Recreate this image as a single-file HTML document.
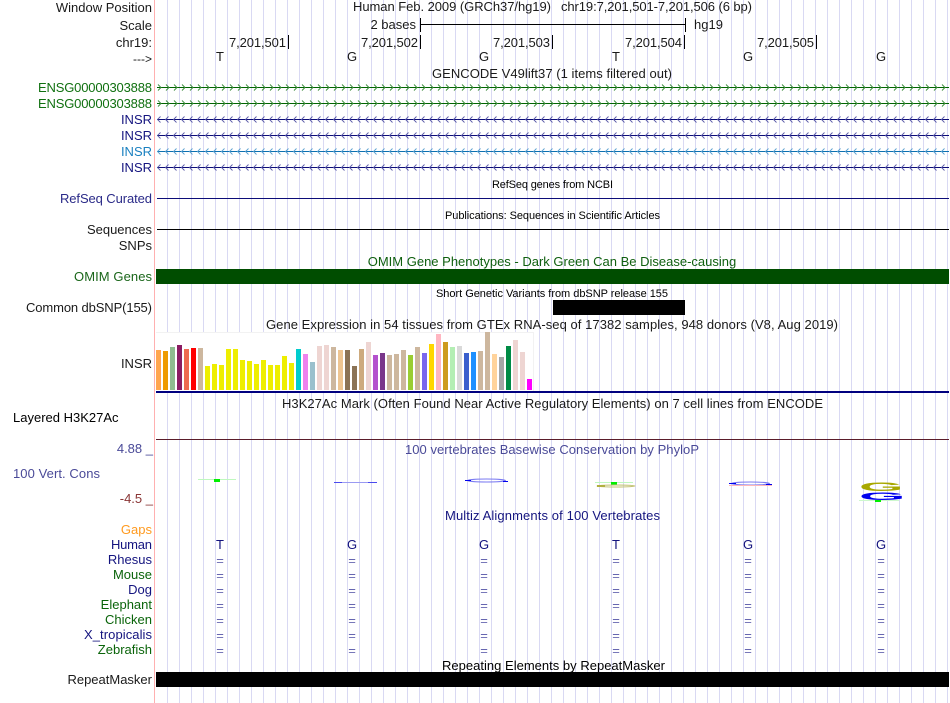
<!DOCTYPE html>
<html><head><meta charset="utf-8"><style>
html,body{margin:0;padding:0;background:#fff;width:950px;height:703px;overflow:hidden}
svg{display:block}
text{font-family:"Liberation Sans",sans-serif;font-size:13px;fill:#1a1a1a}
.l{text-anchor:end}
.c{text-anchor:middle}
.s{font-size:11px;fill:#000}
.n{fill:#14147f}.g{fill:#0a640a}
.eq{fill:#6666b0;text-anchor:middle}
</style></head><body>
<svg width="950" height="703" viewBox="0 0 950 703" xmlns="http://www.w3.org/2000/svg">
<defs>
<pattern id="grid" x="167" y="0" width="12" height="703" patternUnits="userSpaceOnUse"><rect width="1" height="703" fill="#d9d9f3"/></pattern>
<pattern id="pg" x="157" y="-4" width="8" height="9" patternUnits="userSpaceOnUse"><path d="M1 1.500 L4 4.500 L1 7.500" fill="none" stroke="#3a8a3a" stroke-width="0.900"/></pattern>
<pattern id="pn" x="157" y="-4" width="8" height="9" patternUnits="userSpaceOnUse"><path d="M3.500 1.500 L0.500 4.500 L3.500 7.500" fill="none" stroke="#5a5aa8" stroke-width="0.900"/></pattern>
<pattern id="pb" x="157" y="-4" width="8" height="9" patternUnits="userSpaceOnUse"><path d="M3.500 1.500 L0.500 4.500 L3.500 7.500" fill="none" stroke="#5aa0d0" stroke-width="0.900"/></pattern>
</defs>
<rect x="156" y="0" width="794" height="703" fill="url(#grid)"/>
<rect x="154" y="0" width="1" height="703" fill="#ffb0b0"/>

<!-- header -->
<text class="l" x="152" y="12">Window Position</text>
<text class="l" x="152" y="30">Scale</text>
<text class="l" x="152" y="47">chr19:</text>
<text class="l" x="152" y="63" style="font-size:12px">---&gt;</text>
<text x="353" y="11" textLength="198">Human Feb. 2009 (GRCh37/hg19)</text>
<text x="561" y="11" textLength="191">chr19:7,201,501-7,201,506 (6 bp)</text>
<text class="l" x="416" y="29">2 bases</text>
<rect x="420" y="24" width="265" height="1" fill="#000"/>
<rect x="420" y="18" width="1" height="14" fill="#000"/>
<rect x="685" y="18" width="1" height="14" fill="#000"/>
<text x="694" y="29">hg19</text>
<text x="229" y="47" textLength="57">7,201,501</text><rect x="288" y="35" width="1" height="14" fill="#000"/>
<text x="361" y="47" textLength="57">7,201,502</text><rect x="420" y="35" width="1" height="14" fill="#000"/>
<text x="493" y="47" textLength="57">7,201,503</text><rect x="552" y="35" width="1" height="14" fill="#000"/>
<text x="625" y="47" textLength="57">7,201,504</text><rect x="684" y="35" width="1" height="14" fill="#000"/>
<text x="757" y="47" textLength="57">7,201,505</text><rect x="816" y="35" width="1" height="14" fill="#000"/>
<text class="c" x="220" y="61">T</text><text class="c" x="352" y="61">G</text><text class="c" x="484" y="61">G</text><text class="c" x="616" y="61">T</text><text class="c" x="748" y="61">G</text><text class="c" x="881" y="61">G</text>

<!-- gencode -->
<text x="432" y="78" textLength="240">GENCODE V49lift37 (1 items filtered out)</text>
<text x="38" y="92" textLength="114" style="fill:#107010">ENSG00000303888</text>
<text x="38" y="108" textLength="114" style="fill:#107010">ENSG00000303888</text>
<text class="l n" x="152" y="124">INSR</text>
<text class="l n" x="152" y="140">INSR</text>
<text class="l" x="152" y="156" style="fill:#1a80c0">INSR</text>
<text class="l n" x="152" y="172">INSR</text>
<g transform="translate(0,87)"><rect x="157" y="0" width="792" height="1" fill="#006400"/><rect x="157" y="-4" width="792" height="9" fill="url(#pg)"/></g>
<g transform="translate(0,103)"><rect x="157" y="0" width="792" height="1" fill="#006400"/><rect x="157" y="-4" width="792" height="9" fill="url(#pg)"/></g>
<g transform="translate(0,119)"><rect x="157" y="0" width="792" height="1" fill="#0c0c78"/><rect x="157" y="-4" width="792" height="9" fill="url(#pn)"/></g>
<g transform="translate(0,135)"><rect x="157" y="0" width="792" height="1" fill="#0c0c78"/><rect x="157" y="-4" width="792" height="9" fill="url(#pn)"/></g>
<g transform="translate(0,151)"><rect x="157" y="0" width="792" height="1" fill="#0c70b0"/><rect x="157" y="-4" width="792" height="9" fill="url(#pb)"/></g>
<g transform="translate(0,167)"><rect x="157" y="0" width="792" height="1" fill="#0c0c78"/><rect x="157" y="-4" width="792" height="9" fill="url(#pn)"/></g>

<!-- refseq etc -->
<text class="s" x="492" y="188" textLength="121">RefSeq genes from NCBI</text>
<text x="60" y="203" textLength="92" style="fill:#2a2a88">RefSeq Curated</text>
<rect x="157" y="198" width="792" height="1" fill="#0c0c78"/>
<text class="s" x="445" y="219" textLength="215">Publications: Sequences in Scientific Articles</text>
<text class="l" x="152" y="234">Sequences</text>
<rect x="157" y="229" width="792" height="1" fill="#000"/>
<text class="l" x="152" y="250">SNPs</text>
<text class="c" x="552" y="266" style="fill:#0f5f0f">OMIM Gene Phenotypes - Dark Green Can Be Disease-causing</text>
<text x="74" y="281" textLength="78" style="fill:#1a661a">OMIM Genes</text>
<rect x="156" y="269" width="793" height="15" fill="#004d00"/>
<text class="s" x="436" y="297" textLength="232">Short Genetic Variants from dbSNP release 155</text>
<text x="26" y="312" textLength="126">Common dbSNP(155)</text>
<rect x="553" y="300" width="132" height="15" fill="#000"/>

<!-- GTEx -->
<text x="266" y="329" textLength="572">Gene Expression in 54 tissues from GTEx RNA-seq of 17382 samples, 948 donors (V8, Aug 2019)</text>
<text class="l" x="152" y="368">INSR</text>
<rect x="156" y="332" width="377" height="59" fill="#fff"/>
<path d="M156 332.500H533.500V391" fill="none" stroke="#f2f2f2"/>
<g>
<rect x="156" y="350" width="5" height="40" fill="#FFA54F"/>
<rect x="163" y="351" width="5" height="39" fill="#EE9A00"/>
<rect x="170" y="347" width="5" height="43" fill="#8FBC8F"/>
<rect x="177" y="345" width="5" height="45" fill="#8B1C62"/>
<rect x="184" y="349" width="5" height="41" fill="#EE6A50"/>
<rect x="191" y="348" width="5" height="42" fill="#FF0000"/>
<rect x="198" y="348" width="5" height="42" fill="#CDB79E"/>
<rect x="205" y="366" width="5" height="24" fill="#EEEE00"/>
<rect x="212" y="364" width="5" height="26" fill="#EEEE00"/>
<rect x="219" y="365" width="5" height="25" fill="#EEEE00"/>
<rect x="226" y="349" width="5" height="41" fill="#EEEE00"/>
<rect x="233" y="349" width="5" height="41" fill="#EEEE00"/>
<rect x="240" y="360" width="5" height="30" fill="#EEEE00"/>
<rect x="247" y="361" width="5" height="29" fill="#EEEE00"/>
<rect x="254" y="364" width="5" height="26" fill="#EEEE00"/>
<rect x="261" y="360" width="5" height="30" fill="#EEEE00"/>
<rect x="268" y="365" width="5" height="25" fill="#EEEE00"/>
<rect x="275" y="365" width="5" height="25" fill="#EEEE00"/>
<rect x="282" y="356" width="5" height="34" fill="#EEEE00"/>
<rect x="289" y="363" width="5" height="27" fill="#EEEE00"/>
<rect x="296" y="349" width="5" height="41" fill="#00CDCD"/>
<rect x="303" y="354" width="5" height="36" fill="#EE82EE"/>
<rect x="310" y="362" width="5" height="28" fill="#9AC0CD"/>
<rect x="317" y="346" width="5" height="44" fill="#EED5D2"/>
<rect x="324" y="345" width="5" height="45" fill="#EED5D2"/>
<rect x="331" y="347" width="5" height="43" fill="#CDB79E"/>
<rect x="338" y="350" width="5" height="40" fill="#EEC591"/>
<rect x="345" y="350" width="5" height="40" fill="#8B7355"/>
<rect x="352" y="366" width="5" height="24" fill="#8B7355"/>
<rect x="359" y="349" width="5" height="41" fill="#CDAA7D"/>
<rect x="366" y="342" width="5" height="48" fill="#EED5D2"/>
<rect x="373" y="355" width="5" height="35" fill="#B452CD"/>
<rect x="380" y="353" width="5" height="37" fill="#7A378B"/>
<rect x="387" y="355" width="5" height="35" fill="#CDB79E"/>
<rect x="394" y="354" width="5" height="36" fill="#CDB79E"/>
<rect x="401" y="350" width="5" height="40" fill="#CDB79E"/>
<rect x="408" y="355" width="5" height="35" fill="#9ACD32"/>
<rect x="415" y="347" width="5" height="43" fill="#CDB79E"/>
<rect x="422" y="353" width="5" height="37" fill="#7A67EE"/>
<rect x="429" y="344" width="5" height="46" fill="#FFD700"/>
<rect x="436" y="334" width="5" height="56" fill="#FFB6C1"/>
<rect x="443" y="342" width="5" height="48" fill="#CD9B1D"/>
<rect x="450" y="347" width="5" height="43" fill="#B4EEB4"/>
<rect x="457" y="346" width="5" height="44" fill="#D9D9D9"/>
<rect x="464" y="353" width="5" height="37" fill="#3A5FCD"/>
<rect x="471" y="352" width="5" height="38" fill="#1E90FF"/>
<rect x="478" y="351" width="5" height="39" fill="#CDB79E"/>
<rect x="485" y="332" width="5" height="58" fill="#CDB79E"/>
<rect x="492" y="354" width="5" height="36" fill="#FFD39B"/>
<rect x="499" y="357" width="5" height="33" fill="#A6A6A6"/>
<rect x="506" y="346" width="5" height="44" fill="#008B45"/>
<rect x="513" y="340" width="5" height="50" fill="#EED5D2"/>
<rect x="520" y="352" width="5" height="38" fill="#EED5D2"/>
<rect x="527" y="379" width="5" height="11" fill="#FF00FF"/>
</g>
<rect x="156" y="391" width="793" height="2" fill="#00007f"/>

<!-- H3K27Ac -->
<text x="282" y="408" textLength="541">H3K27Ac Mark (Often Found Near Active Regulatory Elements) on 7 cell lines from ENCODE</text>
<text x="13" y="422" style="fill:#000">Layered H3K27Ac</text>
<rect x="156" y="439" width="793" height="1" fill="#5a1c2a"/>

<!-- cons -->
<text class="l" x="153" y="453" style="fill:#4a4a98">4.88 _</text>
<text x="13" y="478" textLength="87" style="fill:#4a4a98">100 Vert. Cons</text>
<text class="l" x="153" y="503" style="fill:#8a3535">-4.5 _</text>
<text x="405" y="454" textLength="294" style="fill:#4a4a98">100 vertebrates Basewise Conservation by PhyloP</text>

<!-- logos -->
<rect x="198" y="479" width="38" height="1" fill="#bff8bf"/>
<rect x="214" y="479" width="6" height="3" fill="#00ee00"/>
<rect x="334" y="482" width="43" height="1" fill="#9a9af2"/>
<rect x="334" y="482" width="8" height="1" fill="#4a4aee"/>
<rect x="368" y="482" width="9" height="1" fill="#4a4aee"/>
<ellipse cx="486.500" cy="480.500" rx="19" ry="1.500" fill="none" stroke="#7a7af2" stroke-width="1"/>
<rect x="465" y="480" width="6" height="1" fill="#0000ee"/>
<rect x="503" y="481" width="5" height="1" fill="#0000ee"/>
<rect x="595" y="482" width="38" height="1" fill="#bff8bf"/>
<rect x="611" y="482" width="6" height="3" fill="#00ee00"/>
<ellipse cx="616" cy="486" rx="19" ry="1" fill="none" stroke="#c0c070" stroke-width="1"/>
<rect x="597" y="485" width="8" height="2" fill="#b0b040"/>
<ellipse cx="750.500" cy="483.500" rx="19" ry="1.500" fill="none" stroke="#7a7af2" stroke-width="1"/>
<rect x="729" y="483" width="7" height="1" fill="#0000ee"/>
<rect x="766" y="484" width="6" height="1" fill="#0000ee"/>
<rect x="729" y="485" width="43" height="1" fill="#ffb8b8"/>
<text transform="translate(859,491) scale(4.400,0.950)" style="fill:#a8a800;font-size:13px;font-weight:bold">G</text>
<text transform="translate(859,500) scale(4.600,0.850)" style="fill:#0000ee;font-size:13px;font-weight:bold">G</text>
<rect x="859" y="500" width="40" height="1" fill="#cdf8cd"/>
<rect x="875" y="500" width="6" height="2" fill="#00ee00"/>

<!-- multiz -->
<text class="n" x="445" y="520" textLength="215">Multiz Alignments of 100 Vertebrates</text>
<text class="l" x="152" y="534" style="fill:#ff9a1f">Gaps</text>
<text class="n" x="111" y="549" textLength="41">Human</text>
<text class="l n" x="152" y="564">Rhesus</text>
<text class="l g" x="152" y="579">Mouse</text>
<text class="l n" x="152" y="594">Dog</text>
<text class="l g" x="152" y="609">Elephant</text>
<text class="l g" x="152" y="624">Chicken</text>
<text class="n" x="84" y="639" textLength="68">X_tropicalis</text>
<text class="l g" x="152" y="654">Zebrafish</text>
<g class="n">
<text class="c n" x="220" y="549">T</text><text class="c n" x="352" y="549">G</text><text class="c n" x="484" y="549">G</text><text class="c n" x="616" y="549">T</text><text class="c n" x="748" y="549">G</text><text class="c n" x="881" y="549">G</text>
</g>
<text class="eq" x="220" y="565">=</text><text class="eq" x="352" y="565">=</text><text class="eq" x="484" y="565">=</text><text class="eq" x="616" y="565">=</text><text class="eq" x="748" y="565">=</text><text class="eq" x="881" y="565">=</text>
<text class="eq" x="220" y="580">=</text><text class="eq" x="352" y="580">=</text><text class="eq" x="484" y="580">=</text><text class="eq" x="616" y="580">=</text><text class="eq" x="748" y="580">=</text><text class="eq" x="881" y="580">=</text>
<text class="eq" x="220" y="595">=</text><text class="eq" x="352" y="595">=</text><text class="eq" x="484" y="595">=</text><text class="eq" x="616" y="595">=</text><text class="eq" x="748" y="595">=</text><text class="eq" x="881" y="595">=</text>
<text class="eq" x="220" y="610">=</text><text class="eq" x="352" y="610">=</text><text class="eq" x="484" y="610">=</text><text class="eq" x="616" y="610">=</text><text class="eq" x="748" y="610">=</text><text class="eq" x="881" y="610">=</text>
<text class="eq" x="220" y="625">=</text><text class="eq" x="352" y="625">=</text><text class="eq" x="484" y="625">=</text><text class="eq" x="616" y="625">=</text><text class="eq" x="748" y="625">=</text><text class="eq" x="881" y="625">=</text>
<text class="eq" x="220" y="640">=</text><text class="eq" x="352" y="640">=</text><text class="eq" x="484" y="640">=</text><text class="eq" x="616" y="640">=</text><text class="eq" x="748" y="640">=</text><text class="eq" x="881" y="640">=</text>
<text class="eq" x="220" y="655">=</text><text class="eq" x="352" y="655">=</text><text class="eq" x="484" y="655">=</text><text class="eq" x="616" y="655">=</text><text class="eq" x="748" y="655">=</text><text class="eq" x="881" y="655">=</text>

<!-- repeatmasker -->
<text x="442" y="670" textLength="223" style="fill:#000">Repeating Elements by RepeatMasker</text>
<text class="l" x="152" y="684">RepeatMasker</text>
<rect x="156" y="672" width="793" height="15" fill="#000"/>
</svg>
</body></html>
